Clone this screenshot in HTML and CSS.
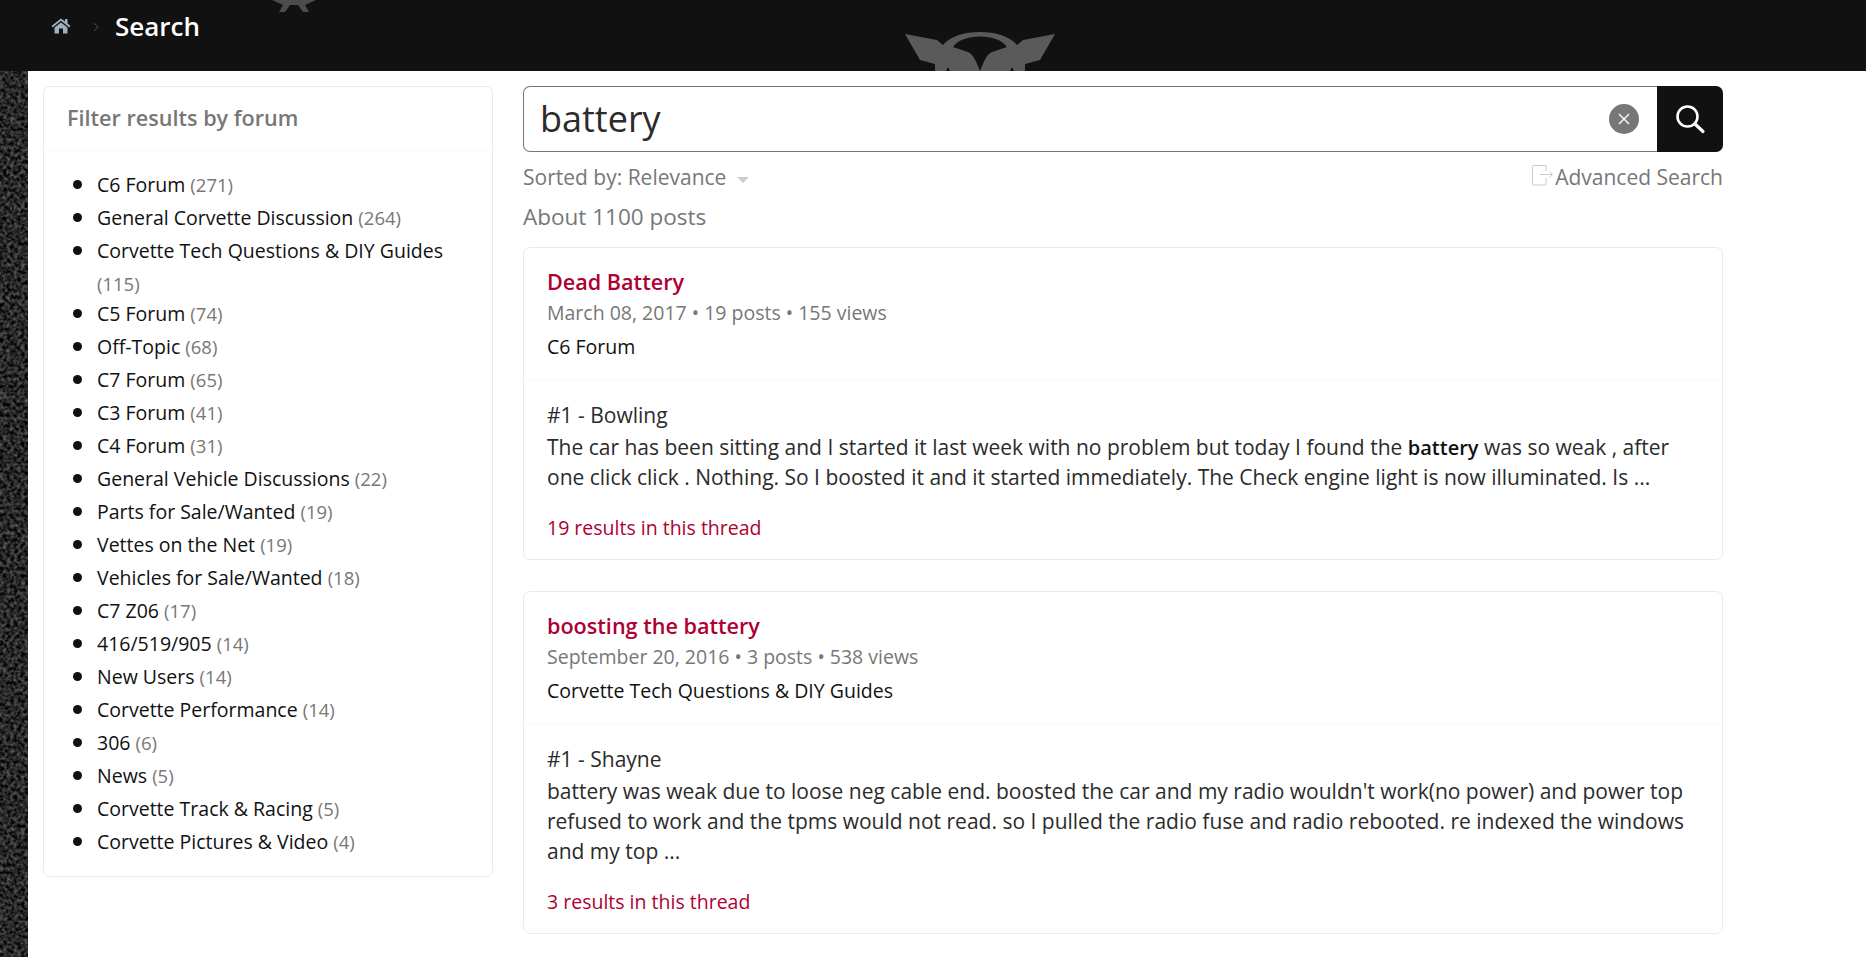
FILE: index.html
```html
<!DOCTYPE html>
<html lang="en">
<head>
<meta charset="utf-8">
<title>Search</title>
<link rel="stylesheet" href="styles.css">
</head>
<body>
<header class="topbar">
  <svg class="emblem-small" viewBox="0 0 44 13" aria-hidden="true"><path d="M0 0H44L33 5 37 12 31 12 26 5H18L13 12 7 12 11 5Z"/></svg>
  <svg class="emblem" viewBox="0 0 152 40" aria-hidden="true">
    <path d="M1 1 33 7 39 12C52-5.500 100-5.500 113 12L119 7 151 1 136 27 121 31V40H111L108 34 105 40H47L44 34 41 40H31V31L16 27Z"/>
    <path class="emblem-cut" d="M49 14C58 0 94 0 103 14L88 19C83 21 80 28 76 38 72 28 69 21 64 19Z"/>
  </svg>
  <a class="home" href="#" aria-label="Home">
    <svg viewBox="0 0 20 16" width="20" height="16"><path d="M10 0.500 0.500 8 1.600 9.400 10 2.800 18.400 9.400 19.500 8 16.500 5.500V1H14V3.500ZM3.500 9.500V15.500H8V10.500H12V15.500H16.500V9.500L10 4.400Z"/></svg>
  </a>
  <svg class="crumb-sep" viewBox="0 0 6 10" width="6" height="10" aria-hidden="true"><path d="M1 1 5 5 1 9" fill="none" stroke="#4a4f55" stroke-width="1"/></svg>
  <h1 class="page-title">Search</h1>
</header>
<div class="page">
  <div class="texture" aria-hidden="true">
    <svg width="28" height="886">
      <filter id="grain" x="0" y="0" width="100%" height="100%" color-interpolation-filters="sRGB">
        <feTurbulence type="fractalNoise" baseFrequency="0.28" numOctaves="2" seed="7"/>
        <feColorMatrix type="matrix" values="0.650 0 0 0 -0.17  0.650 0 0 0 -0.17  0.650 0 0 0 -0.17  0 0 0 0 1"/>
      </filter>
      <filter id="speck" x="0" y="0" width="100%" height="100%" color-interpolation-filters="sRGB">
        <feTurbulence type="fractalNoise" baseFrequency="0.25" numOctaves="2" seed="21"/>
        <feColorMatrix type="matrix" values="0 0 0 0 0.45  0 0 0 0 0.45  0 0 0 0 0.45  4 0 0 0 -3.100"/>
      </filter>
      <rect width="28" height="886" filter="url(#grain)"/>
      <rect width="28" height="886" filter="url(#speck)"/>
    </svg>
  </div>
  <main class="content">
    <aside class="filter-card">
      <h2 class="filter-title">Filter results by forum</h2>
      <ul class="forum-list">
        <li><a href="#">C6 Forum</a> <span class="count">(271)</span></li>
        <li><a href="#">General Corvette Discussion</a> <span class="count">(264)</span></li>
        <li><a href="#">Corvette Tech Questions &amp; DIY Guides</a> <span class="count">(115)</span></li>
        <li><a href="#">C5 Forum</a> <span class="count">(74)</span></li>
        <li><a href="#">Off-Topic</a> <span class="count">(68)</span></li>
        <li><a href="#">C7 Forum</a> <span class="count">(65)</span></li>
        <li><a href="#">C3 Forum</a> <span class="count">(41)</span></li>
        <li><a href="#">C4 Forum</a> <span class="count">(31)</span></li>
        <li><a href="#">General Vehicle Discussions</a> <span class="count">(22)</span></li>
        <li><a href="#">Parts for Sale/Wanted</a> <span class="count">(19)</span></li>
        <li><a href="#">Vettes on the Net</a> <span class="count">(19)</span></li>
        <li><a href="#">Vehicles for Sale/Wanted</a> <span class="count">(18)</span></li>
        <li><a href="#">C7 Z06</a> <span class="count">(17)</span></li>
        <li><a href="#">416/519/905</a> <span class="count">(14)</span></li>
        <li><a href="#">New Users</a> <span class="count">(14)</span></li>
        <li><a href="#">Corvette Performance</a> <span class="count">(14)</span></li>
        <li><a href="#">306</a> <span class="count">(6)</span></li>
        <li><a href="#">News</a> <span class="count">(5)</span></li>
        <li><a href="#">Corvette Track &amp; Racing</a> <span class="count">(5)</span></li>
        <li><a href="#">Corvette Pictures &amp; Video</a> <span class="count">(4)</span></li>
      </ul>
    </aside>
    <section class="results">
      <form class="search-form">
        <div class="search-box">
          <span class="search-text">battery</span>
          <span class="clear-btn"><svg viewBox="0 0 14 14" width="14" height="14"><path d="M2 2 12 12M12 2 2 12" stroke="#fff" stroke-width="1.400" fill="none"/></svg></span>
        </div>
        <span class="search-btn"><svg viewBox="0 0 32 32" width="32" height="32"><circle cx="13.500" cy="13.500" r="10" fill="none" stroke="#fff" stroke-width="2.600"/><path d="M21 21 29 28.500" stroke="#fff" stroke-width="3.200" stroke-linecap="round"/></svg></span>
      </form>
      <div class="sort-row">
        <span class="sorted">Sorted by: Relevance <i class="caret"></i></span>
        <a class="advanced" href="#">
          <svg viewBox="0 0 22 22" width="22" height="22"><path d="M14 7V1.500L1.500 1.500A1 1 0 0 0 .5 2.500V20A1 1 0 0 0 1.500 21H13A1 1 0 0 0 14 20V14M8 10.500H20.500M17.500 7.500 20.500 10.500 17.500 13.500" fill="none" stroke="#cfc8c8" stroke-width="1"/></svg>
          Advanced Search</a>
      </div>
      <p class="total">About 1100 posts</p>

      <article class="result-card">
        <div class="thread-head">
          <h3 class="thread-title"><a href="#">Dead Battery</a></h3>
          <div class="thread-meta">March 08, 2017 • 19 posts • 155 views</div>
          <div class="thread-forum">C6 Forum</div>
        </div>
        <div class="thread-body">
          <div class="post-author">#1 - Bowling</div>
          <p class="post-text">The car has been sitting and I started it last week with no problem but today I found the <b>battery</b> was so weak , after one click click . Nothing. So I boosted it and it started immediately. The Check engine light is now illuminated. Is ...</p>
          <a class="more" href="#">19 results in this thread</a>
        </div>
      </article>

      <article class="result-card">
        <div class="thread-head">
          <h3 class="thread-title"><a href="#">boosting the battery</a></h3>
          <div class="thread-meta">September 20, 2016 • 3 posts • 538 views</div>
          <div class="thread-forum">Corvette Tech Questions &amp; DIY Guides</div>
        </div>
        <div class="thread-body">
          <div class="post-author">#1 - Shayne</div>
          <p class="post-text">battery was weak due to loose neg cable end. boosted the car and my radio wouldn't work(no power) and power top refused to work and the tpms would not read. so I pulled the radio fuse and radio rebooted. re indexed the windows and my top ...</p>
          <a class="more" href="#">3 results in this thread</a>
        </div>
      </article>
    </section>
  </main>
</div>
</body>
</html>
```

FILE: styles.css
```css
* { box-sizing: border-box; }
html, body { margin: 0; height: 100%; overflow: hidden; }
body { background: #fff; font-family: "Open Sans", sans-serif; font-size: 19.5px; color: #2b2b2b; }
a { text-decoration: none; color: inherit; }

.topbar { position: relative; height: 71px; background: #111; display: flex; align-items: flex-start; padding: 13px 0 0 51px; overflow: hidden; }
.emblem { position: absolute; left: 904px; top: 33px; width: 152px; height: 40px; fill: #5a5a5a; overflow: visible; filter: blur(0.4px); }
.emblem-cut { fill: #111; }
.emblem-small { position: absolute; left: 272px; top: 0; width: 44px; height: 13px; fill: #4c4c4c; filter: blur(0.6px); }
.home { display: flex; margin-top: 5px; fill: #9fb1bd; }
.crumb-sep { margin: 9px 0 0 22px; }
.page-title { margin: 0 0 0 16px; font-size: 26px; font-weight: 600; line-height: 27px; color: #fff; }

.page { display: flex; height: 886px; }
.texture { width: 28px; flex: none; background: #2c2c2c; }
.texture svg { display: block; }
.content { flex: 1; display: flex; align-items: flex-start; gap: 30px; padding: 15px 0 0 15px; }

.filter-card { width: 450px; height: 791px; flex: none; border: 1px solid #ebebeb; border-radius: 7px; }
.filter-title { margin: 0; height: 64px; padding: 16px 23px 0; font-size: 21.6px; font-weight: 600; line-height: 30px; color: #777; border-bottom: 1px solid #fafafa; }
.forum-list { margin: 0; padding: 19px 20px 0 53px; list-style: none; color: #111; }
.forum-list li { position: relative; line-height: 30px; }
.forum-list li::before { content: ""; position: absolute; left: -24px; top: 10px; width: 9px; height: 9px; border-radius: 50%; background: #111; }
.forum-list a { display: inline-block; padding-bottom: 3px; color: #111; }
.count { color: #777; font-size: 18.5px; }

.results { width: 1200px; flex: none; }
.search-form { display: flex; height: 66px; }
.search-box { flex: 1; display: flex; align-items: center; justify-content: space-between; padding: 0 18px 0 16px; border: 1px solid #777; border-right: 0; border-radius: 7px 0 0 7px; }
.search-text { font-size: 36px; line-height: 50px; color: #2b2b2b; }
.clear-btn { width: 30px; height: 30px; border-radius: 50%; background: #777; display: flex; align-items: center; justify-content: center; }
.search-btn { width: 66px; background: #111; border-radius: 0 7px 7px 0; display: flex; align-items: center; justify-content: center; }

.sort-row { display: flex; justify-content: space-between; margin-top: 10px; height: 30px; line-height: 30px; font-size: 21px; color: #777; }
.caret { display: inline-block; width: 0; height: 0; margin: 0 0 2px 5px; border: 6px solid transparent; border-top: 6px solid #ccc; border-bottom: 0; }
.advanced svg { vertical-align: -1px; margin-right: -4px; }
.total { margin: 10px 0 0; font-size: 22.5px; line-height: 30px; color: #777; }

.result-card { margin-top: 15px; border: 1px solid #ebebeb; border-radius: 7px; margin-bottom: 31px; }
.thread-head { padding: 19px 23px 18px; border-bottom: 1px solid #fafafa; }
.thread-title { margin: 0; font-size: 21.6px; font-weight: 600; line-height: 30px; color: #ae0032; }
.thread-meta { margin-top: 1px; line-height: 30px; color: #777; }
.thread-forum { margin-top: 4px; line-height: 30px; color: #111; }
.thread-body { padding: 18px 23px 16px; }
.post-author { font-size: 21px; font-weight: 500; line-height: 33px; color: #2b2b2b; }
.post-text { margin: 0; font-size: 21px; line-height: 30px; color: #2b2b2b; }
.post-text b { font-size: 20px; line-height: 1; font-weight: 600; color: #111; }
.more { display: block; margin-top: 21px; font-size: 19.5px; line-height: 30px; color: #ae0032; }
```
